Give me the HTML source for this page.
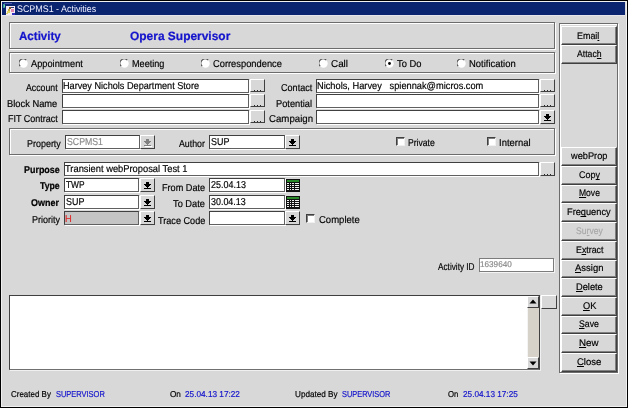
<!DOCTYPE html><html><head><meta charset="utf-8"><style>*{margin:0;padding:0;box-sizing:border-box}html,body{width:628px;height:408px;overflow:hidden;background:#d8d8d8;font-family:"Liberation Sans",sans-serif}.a{position:absolute}.t{position:absolute;white-space:pre;line-height:14px;transform-origin:0 0;text-rendering:geometricPrecision}.u{position:relative}.u:after{content:"";position:absolute;left:0;right:0;bottom:1px;height:1px;background:currentColor}u{text-decoration:none;border-bottom:1px solid currentColor}</style></head><body>
<div class="a" style="left:0px;top:0px;width:628px;height:408px;background:#d8d8d8"></div>
<div class="a" style="left:0px;top:0px;width:628px;height:1px;background:#000"></div>
<div class="a" style="left:0px;top:0px;width:1px;height:408px;background:#000"></div>
<div class="a" style="left:0px;top:407px;width:628px;height:1px;background:#000"></div>
<div class="a" style="left:627px;top:0px;width:1px;height:408px;background:#000"></div>
<div class="a" style="left:1px;top:1px;width:626px;height:1px;background:#f0f0f0"></div>
<div class="a" style="left:1px;top:1px;width:1px;height:406px;background:#f0f0f0"></div>
<div class="a" style="left:1px;top:406px;width:626px;height:1px;background:#f0f0f0"></div>
<div class="a" style="left:626px;top:1px;width:1px;height:406px;background:#f0f0f0"></div>
<div class="a" style="left:2px;top:2px;width:623px;height:13px;background:#0a2470"></div>
<div class="a" style="left:2px;top:15px;width:623px;height:1px;background:#e6e6ea"></div>
<div class="a" style="left:9px;top:22px;width:546px;height:27px;border:1px solid #6c6c6c;box-shadow:inset 1px 1px 0 #fff,1px 1px 0 #fff"></div>
<div class="a" style="left:9px;top:52px;width:546px;height:21px;border:1px solid #6c6c6c;box-shadow:inset 1px 1px 0 #fff,1px 1px 0 #fff"></div>
<div class="a" style="left:9px;top:128px;width:546px;height:27px;border:1px solid #6c6c6c;box-shadow:inset 1px 1px 0 #fff,1px 1px 0 #fff"></div>
<div class="a" style="left:559px;top:23px;width:59px;height:350px;border:1px solid #6c6c6c;box-shadow:inset 1px 1px 0 #fff,1px 1px 0 #fff"></div>
<div class="a" style="left:62px;top:79px;width:187px;height:14px;background:#fff;border:1px solid;border-color:#404040 #606060 #606060 #404040;box-shadow:1px 1px 0 #fff"></div>
<div class="a" style="left:250px;top:79px;width:15px;height:13px;background:#d8d8d8;border:1px solid;border-color:#fff #404040 #404040 #fff"></div>
<div class="a" style="left:254px;top:90px;width:1px;height:1px;background:#282828"></div>
<div class="a" style="left:257px;top:90px;width:1px;height:1px;background:#282828"></div>
<div class="a" style="left:260px;top:90px;width:1px;height:1px;background:#282828"></div>
<div class="a" style="left:316px;top:79px;width:223px;height:14px;background:#fff;border:1px solid;border-color:#404040 #606060 #606060 #404040;box-shadow:1px 1px 0 #fff"></div>
<div class="a" style="left:62px;top:94px;width:187px;height:14px;background:#fff;border:1px solid;border-color:#404040 #606060 #606060 #404040;box-shadow:1px 1px 0 #fff"></div>
<div class="a" style="left:250px;top:94px;width:15px;height:13px;background:#d8d8d8;border:1px solid;border-color:#fff #404040 #404040 #fff"></div>
<div class="a" style="left:254px;top:105px;width:1px;height:1px;background:#282828"></div>
<div class="a" style="left:257px;top:105px;width:1px;height:1px;background:#282828"></div>
<div class="a" style="left:260px;top:105px;width:1px;height:1px;background:#282828"></div>
<div class="a" style="left:316px;top:94px;width:223px;height:14px;background:#fff;border:1px solid;border-color:#404040 #606060 #606060 #404040;box-shadow:1px 1px 0 #fff"></div>
<div class="a" style="left:62px;top:110px;width:187px;height:14px;background:#fff;border:1px solid;border-color:#404040 #606060 #606060 #404040;box-shadow:1px 1px 0 #fff"></div>
<div class="a" style="left:250px;top:110px;width:15px;height:13px;background:#d8d8d8;border:1px solid;border-color:#fff #404040 #404040 #fff"></div>
<div class="a" style="left:254px;top:121px;width:1px;height:1px;background:#282828"></div>
<div class="a" style="left:257px;top:121px;width:1px;height:1px;background:#282828"></div>
<div class="a" style="left:260px;top:121px;width:1px;height:1px;background:#282828"></div>
<div class="a" style="left:316px;top:110px;width:223px;height:14px;background:#fff;border:1px solid;border-color:#404040 #606060 #606060 #404040;box-shadow:1px 1px 0 #fff"></div>
<div class="a" style="left:540px;top:79px;width:15px;height:13px;background:#d8d8d8;border:1px solid;border-color:#fff #404040 #404040 #fff"></div>
<div class="a" style="left:544px;top:90px;width:1px;height:1px;background:#282828"></div>
<div class="a" style="left:547px;top:90px;width:1px;height:1px;background:#282828"></div>
<div class="a" style="left:550px;top:90px;width:1px;height:1px;background:#282828"></div>
<div class="a" style="left:540px;top:94px;width:15px;height:13px;background:#d8d8d8;border:1px solid;border-color:#fff #404040 #404040 #fff"></div>
<div class="a" style="left:544px;top:105px;width:1px;height:1px;background:#282828"></div>
<div class="a" style="left:547px;top:105px;width:1px;height:1px;background:#282828"></div>
<div class="a" style="left:550px;top:105px;width:1px;height:1px;background:#282828"></div>
<div class="a" style="left:540px;top:110px;width:15px;height:14px;background:#d8d8d8;border:1px solid;border-color:#fff #404040 #404040 #fff"></div>
<svg class="a" style="left:540px;top:110px" width="15" height="14"><path d="M6 4h3v2h-3z M4 6h7v1h-7z M5 7h5v1h-5z M6 8h3v1h-3z M7 9h1v1h-1z M4 10h7v1h-7z" fill="#000"/></svg>
<div class="a" style="left:65px;top:135px;width:75px;height:14px;background:#fff;border:1px solid;border-color:#404040 #606060 #606060 #404040;box-shadow:1px 1px 0 #fff"></div>
<div class="a" style="left:140px;top:135px;width:15px;height:14px;background:#d8d8d8;border:1px solid;border-color:#fff #404040 #404040 #fff"></div>
<svg class="a" style="left:140px;top:135px" width="15" height="14"><path d="M5 11h7v1h-7z" fill="#fff"/><path d="M6 4h3v2h-3z M4 6h7v1h-7z M5 7h5v1h-5z M6 8h3v1h-3z M7 9h1v1h-1z M4 10h7v1h-7z" fill="#808080"/></svg>
<div class="a" style="left:209px;top:135px;width:76px;height:14px;background:#fff;border:1px solid;border-color:#404040 #606060 #606060 #404040;box-shadow:1px 1px 0 #fff"></div>
<div class="a" style="left:285px;top:135px;width:15px;height:14px;background:#d8d8d8;border:1px solid;border-color:#fff #404040 #404040 #fff"></div>
<svg class="a" style="left:285px;top:135px" width="15" height="14"><path d="M6 4h3v2h-3z M4 6h7v1h-7z M5 7h5v1h-5z M6 8h3v1h-3z M7 9h1v1h-1z M4 10h7v1h-7z" fill="#000"/></svg>
<div class="a" style="left:396px;top:137px;width:9px;height:9px;background:#fff;border:1px solid;border-color:#404040 #f0f0f0 #f0f0f0 #404040;box-shadow:inset 1px 1px 0 #808080"></div>
<div class="a" style="left:487px;top:137px;width:9px;height:9px;background:#fff;border:1px solid;border-color:#404040 #f0f0f0 #f0f0f0 #404040;box-shadow:inset 1px 1px 0 #808080"></div>
<div class="a" style="left:306px;top:214px;width:9px;height:9px;background:#fff;border:1px solid;border-color:#404040 #f0f0f0 #f0f0f0 #404040;box-shadow:inset 1px 1px 0 #808080"></div>
<svg class="a" style="left:19px;top:59px" width="10" height="10"><circle cx="4.5" cy="4.5" r="4.2" fill="#fff"/><path d="M1.2 7.2A4.2 4.2 0 0 1 7.2 1.2" stroke="#505050" stroke-width="1.1" fill="none"/></svg>
<svg class="a" style="left:120px;top:59px" width="10" height="10"><circle cx="4.5" cy="4.5" r="4.2" fill="#fff"/><path d="M1.2 7.2A4.2 4.2 0 0 1 7.2 1.2" stroke="#505050" stroke-width="1.1" fill="none"/></svg>
<svg class="a" style="left:201px;top:59px" width="10" height="10"><circle cx="4.5" cy="4.5" r="4.2" fill="#fff"/><path d="M1.2 7.2A4.2 4.2 0 0 1 7.2 1.2" stroke="#505050" stroke-width="1.1" fill="none"/></svg>
<svg class="a" style="left:319px;top:59px" width="10" height="10"><circle cx="4.5" cy="4.5" r="4.2" fill="#fff"/><path d="M1.2 7.2A4.2 4.2 0 0 1 7.2 1.2" stroke="#505050" stroke-width="1.1" fill="none"/></svg>
<svg class="a" style="left:385px;top:59px" width="10" height="10"><circle cx="4.5" cy="4.5" r="4.2" fill="#fff"/><path d="M1.2 7.2A4.2 4.2 0 0 1 7.2 1.2" stroke="#505050" stroke-width="1.1" fill="none"/><circle cx="4.5" cy="4.5" r="1.4" fill="#000"/></svg>
<svg class="a" style="left:457px;top:59px" width="10" height="10"><circle cx="4.5" cy="4.5" r="4.2" fill="#fff"/><path d="M1.2 7.2A4.2 4.2 0 0 1 7.2 1.2" stroke="#505050" stroke-width="1.1" fill="none"/></svg>
<div class="a" style="left:64px;top:162px;width:475px;height:14px;background:#fff;border:1px solid;border-color:#404040 #606060 #606060 #404040;box-shadow:1px 1px 0 #fff"></div>
<div class="a" style="left:540px;top:162px;width:15px;height:14px;background:#d8d8d8;border:1px solid;border-color:#fff #404040 #404040 #fff"></div>
<div class="a" style="left:544px;top:174px;width:1px;height:1px;background:#282828"></div>
<div class="a" style="left:547px;top:174px;width:1px;height:1px;background:#282828"></div>
<div class="a" style="left:550px;top:174px;width:1px;height:1px;background:#282828"></div>
<div class="a" style="left:64px;top:178px;width:75px;height:14px;background:#fff;border:1px solid;border-color:#404040 #606060 #606060 #404040;box-shadow:1px 1px 0 #fff"></div>
<div class="a" style="left:140px;top:178px;width:15px;height:14px;background:#d8d8d8;border:1px solid;border-color:#fff #404040 #404040 #fff"></div>
<svg class="a" style="left:140px;top:178px" width="15" height="14"><path d="M6 4h3v2h-3z M4 6h7v1h-7z M5 7h5v1h-5z M6 8h3v1h-3z M7 9h1v1h-1z M4 10h7v1h-7z" fill="#000"/></svg>
<div class="a" style="left:64px;top:195px;width:75px;height:14px;background:#fff;border:1px solid;border-color:#404040 #606060 #606060 #404040;box-shadow:1px 1px 0 #fff"></div>
<div class="a" style="left:140px;top:195px;width:15px;height:14px;background:#d8d8d8;border:1px solid;border-color:#fff #404040 #404040 #fff"></div>
<svg class="a" style="left:140px;top:195px" width="15" height="14"><path d="M6 4h3v2h-3z M4 6h7v1h-7z M5 7h5v1h-5z M6 8h3v1h-3z M7 9h1v1h-1z M4 10h7v1h-7z" fill="#000"/></svg>
<div class="a" style="left:64px;top:211px;width:75px;height:14px;background:#c4c4c4;border:1px solid;border-color:#404040 #606060 #606060 #404040;box-shadow:1px 1px 0 #fff"></div>
<div class="a" style="left:140px;top:211px;width:15px;height:14px;background:#d8d8d8;border:1px solid;border-color:#fff #404040 #404040 #fff"></div>
<svg class="a" style="left:140px;top:211px" width="15" height="14"><path d="M6 4h3v2h-3z M4 6h7v1h-7z M5 7h5v1h-5z M6 8h3v1h-3z M7 9h1v1h-1z M4 10h7v1h-7z" fill="#000"/></svg>
<div class="a" style="left:209px;top:178px;width:76px;height:14px;background:#fff;border:1px solid;border-color:#404040 #606060 #606060 #404040;box-shadow:1px 1px 0 #fff"></div>
<div class="a" style="left:209px;top:195px;width:76px;height:14px;background:#fff;border:1px solid;border-color:#404040 #606060 #606060 #404040;box-shadow:1px 1px 0 #fff"></div>
<div class="a" style="left:209px;top:211px;width:76px;height:14px;background:#fff;border:1px solid;border-color:#404040 #606060 #606060 #404040;box-shadow:1px 1px 0 #fff"></div>
<div class="a" style="left:285px;top:211px;width:15px;height:14px;background:#d8d8d8;border:1px solid;border-color:#fff #404040 #404040 #fff"></div>
<svg class="a" style="left:285px;top:211px" width="15" height="14"><path d="M6 4h3v2h-3z M4 6h7v1h-7z M5 7h5v1h-5z M6 8h3v1h-3z M7 9h1v1h-1z M4 10h7v1h-7z" fill="#000"/></svg>
<svg class="a" style="left:286px;top:179px" width="14" height="13" shape-rendering="crispEdges"><rect width="14" height="13" fill="#101010"/><rect x="1" y="1" width="12" height="2" fill="#2a8a2a"/><rect x="1" y="4" width="2" height="1" fill="#f0f0f0"/><rect x="4" y="4" width="1" height="1" fill="#f0f0f0"/><rect x="6" y="4" width="2" height="1" fill="#f0f0f0"/><rect x="9" y="4" width="4" height="1" fill="#f0f0f0"/><rect x="1" y="6" width="2" height="1" fill="#f0f0f0"/><rect x="4" y="6" width="1" height="1" fill="#f0f0f0"/><rect x="6" y="6" width="2" height="1" fill="#f0f0f0"/><rect x="9" y="6" width="4" height="1" fill="#f0f0f0"/><rect x="1" y="8" width="2" height="1" fill="#f0f0f0"/><rect x="4" y="8" width="1" height="1" fill="#f0f0f0"/><rect x="6" y="8" width="2" height="1" fill="#f0f0f0"/><rect x="9" y="8" width="4" height="1" fill="#f0f0f0"/><rect x="1" y="10" width="2" height="1" fill="#f0f0f0"/><rect x="4" y="10" width="1" height="1" fill="#f0f0f0"/><rect x="6" y="10" width="2" height="1" fill="#f0f0f0"/><rect x="9" y="10" width="4" height="1" fill="#f0f0f0"/></svg>
<svg class="a" style="left:286px;top:196px" width="14" height="13" shape-rendering="crispEdges"><rect width="14" height="13" fill="#101010"/><rect x="1" y="1" width="12" height="2" fill="#2a8a2a"/><rect x="1" y="4" width="2" height="1" fill="#f0f0f0"/><rect x="4" y="4" width="1" height="1" fill="#f0f0f0"/><rect x="6" y="4" width="2" height="1" fill="#f0f0f0"/><rect x="9" y="4" width="4" height="1" fill="#f0f0f0"/><rect x="1" y="6" width="2" height="1" fill="#f0f0f0"/><rect x="4" y="6" width="1" height="1" fill="#f0f0f0"/><rect x="6" y="6" width="2" height="1" fill="#f0f0f0"/><rect x="9" y="6" width="4" height="1" fill="#f0f0f0"/><rect x="1" y="8" width="2" height="1" fill="#f0f0f0"/><rect x="4" y="8" width="1" height="1" fill="#f0f0f0"/><rect x="6" y="8" width="2" height="1" fill="#f0f0f0"/><rect x="9" y="8" width="4" height="1" fill="#f0f0f0"/><rect x="1" y="10" width="2" height="1" fill="#f0f0f0"/><rect x="4" y="10" width="1" height="1" fill="#f0f0f0"/><rect x="6" y="10" width="2" height="1" fill="#f0f0f0"/><rect x="9" y="10" width="4" height="1" fill="#f0f0f0"/></svg>
<div class="a" style="left:479px;top:258px;width:75px;height:14px;background:#fff;border:1px solid #7c7c7c;box-shadow:1px 1px 0 #f4f4f4"></div>
<div class="a" style="left:9px;top:295px;width:531px;height:75px;background:#fff;border:1px solid;border-color:#404040 #404040 #707070 #404040;box-shadow:1px 1px 0 #f0f0f0"></div>
<div class="a" style="left:527px;top:296px;width:12px;height:73px;background:#d6d2ca;border-left:1px solid #f4f4f4"></div>
<div class="a" style="left:527px;top:296px;width:12px;height:12px;background:#d8d8d8;border:1px solid;border-color:#fff #404040 #404040 #fff"></div>
<div class="a" style="left:527px;top:357px;width:12px;height:12px;background:#d8d8d8;border:1px solid;border-color:#fff #404040 #404040 #fff"></div>
<svg class="a" style="left:527px;top:296px" width="12" height="12"><path d="M6 3.5L9.5 7.5H2.5z" fill="#000"/></svg>
<svg class="a" style="left:527px;top:357px" width="12" height="12"><path d="M6 8.5L9.5 4.5H2.5z" fill="#000"/></svg>
<div class="a" style="left:541px;top:295px;width:16px;height:14px;background:#d8d8d8;border:1px solid;border-color:#fff #404040 #404040 #fff"></div>
<svg class="a" style="left:2px;top:2px" width="14" height="13" shape-rendering="crispEdges"><rect x="2" y="1" width="8" height="1" fill="#4a58b0"/><rect x="1" y="2" width="2" height="4" fill="#3a9a9a"/><rect x="2" y="3" width="1" height="2" fill="#70e0b0"/><rect x="4" y="4" width="9" height="9" fill="#f4eef4"/><rect x="9" y="5" width="3" height="1" fill="#30306a"/><rect x="7" y="5" width="2" height="2" fill="#805030"/><rect x="9" y="7" width="3" height="3" fill="#e088b0"/><rect x="6" y="7" width="2" height="2" fill="#c8b040"/><rect x="5" y="9" width="3" height="2" fill="#e0d860"/><rect x="4" y="11" width="2" height="1" fill="#d8d070"/><rect x="10" y="11" width="3" height="2" fill="#3030c0"/></svg>
<div class="a" style="left:561px;top:26px;width:56px;height:19px;background:#d8d8d8;border-top:1px solid #fff;border-left:1px solid #fff;border-right:1px solid #404040;border-bottom:1px solid #404040;box-shadow:inset -1px -1px 0 #808080"></div>
<div class="a" style="left:561px;top:45px;width:56px;height:19px;background:#d8d8d8;border-top:1px solid #fff;border-left:1px solid #fff;border-right:1px solid #404040;border-bottom:1px solid #404040;box-shadow:inset -1px -1px 0 #808080"></div>
<div class="a" style="left:561px;top:147px;width:56px;height:19px;background:#d8d8d8;border-top:1px solid #fff;border-left:1px solid #fff;border-right:1px solid #404040;border-bottom:1px solid #404040;box-shadow:inset -1px -1px 0 #808080"></div>
<div class="a" style="left:561px;top:166px;width:56px;height:19px;background:#d8d8d8;border-top:1px solid #fff;border-left:1px solid #fff;border-right:1px solid #404040;border-bottom:1px solid #404040;box-shadow:inset -1px -1px 0 #808080"></div>
<div class="a" style="left:561px;top:185px;width:56px;height:18px;background:#d8d8d8;border-top:1px solid #fff;border-left:1px solid #fff;border-right:1px solid #404040;border-bottom:1px solid #404040;box-shadow:inset -1px -1px 0 #808080"></div>
<div class="a" style="left:561px;top:203px;width:56px;height:19px;background:#d8d8d8;border-top:1px solid #fff;border-left:1px solid #fff;border-right:1px solid #404040;border-bottom:1px solid #404040;box-shadow:inset -1px -1px 0 #808080"></div>
<div class="a" style="left:561px;top:222px;width:56px;height:19px;background:#d8d8d8;border-top:1px solid #fff;border-left:1px solid #fff;border-right:1px solid #404040;border-bottom:1px solid #404040;box-shadow:inset -1px -1px 0 #808080"></div>
<div class="a" style="left:561px;top:241px;width:56px;height:19px;background:#d8d8d8;border-top:1px solid #fff;border-left:1px solid #fff;border-right:1px solid #404040;border-bottom:1px solid #404040;box-shadow:inset -1px -1px 0 #808080"></div>
<div class="a" style="left:561px;top:260px;width:56px;height:18px;background:#d8d8d8;border-top:1px solid #fff;border-left:1px solid #fff;border-right:1px solid #404040;border-bottom:1px solid #404040;box-shadow:inset -1px -1px 0 #808080"></div>
<div class="a" style="left:561px;top:278px;width:56px;height:19px;background:#d8d8d8;border-top:1px solid #fff;border-left:1px solid #fff;border-right:1px solid #404040;border-bottom:1px solid #404040;box-shadow:inset -1px -1px 0 #808080"></div>
<div class="a" style="left:561px;top:297px;width:56px;height:19px;background:#d8d8d8;border-top:1px solid #fff;border-left:1px solid #fff;border-right:1px solid #404040;border-bottom:1px solid #404040;box-shadow:inset -1px -1px 0 #808080"></div>
<div class="a" style="left:561px;top:316px;width:56px;height:18px;background:#d8d8d8;border-top:1px solid #fff;border-left:1px solid #fff;border-right:1px solid #404040;border-bottom:1px solid #404040;box-shadow:inset -1px -1px 0 #808080"></div>
<div class="a" style="left:561px;top:334px;width:56px;height:19px;background:#d8d8d8;border-top:1px solid #fff;border-left:1px solid #fff;border-right:1px solid #404040;border-bottom:1px solid #404040;box-shadow:inset -1px -1px 0 #808080"></div>
<div class="a" style="left:561px;top:353px;width:56px;height:19px;background:#d8d8d8;border-top:1px solid #fff;border-left:1px solid #fff;border-right:1px solid #404040;border-bottom:1px solid #404040;box-shadow:inset -1px -1px 0 #808080"></div>
<div class="t" style="left:16.54px;top:3px;font-size:9.6px;color:#f0f0ff;transform:scaleX(0.9283) translateZ(0);-webkit-text-stroke:0px currentColor">SCPMS1 - Activities</div>
<div class="t" style="left:18.77px;top:29px;font-size:12px;color:#1414cc;transform:scaleX(0.9640) translateZ(0);-webkit-text-stroke:0.22px currentColor;font-weight:bold">Activity</div>
<div class="t" style="left:129.62px;top:29px;font-size:12px;color:#1414cc;transform:scaleX(0.9959) translateZ(0);-webkit-text-stroke:0.22px currentColor;font-weight:bold">Opera Supervisor</div>
<div class="t" style="left:31.20px;top:58px;font-size:10px;color:#000;transform:scaleX(0.9240) translateZ(0);-webkit-text-stroke:0.18px currentColor">Appointment</div>
<div class="t" style="left:131.97px;top:58px;font-size:10px;color:#000;transform:scaleX(0.9119) translateZ(0);-webkit-text-stroke:0.18px currentColor">Meeting</div>
<div class="t" style="left:213.33px;top:58px;font-size:10px;color:#000;transform:scaleX(0.9319) translateZ(0);-webkit-text-stroke:0.18px currentColor">Correspondence</div>
<div class="t" style="left:330.91px;top:58px;font-size:10px;color:#000;transform:scaleX(0.9873) translateZ(0);-webkit-text-stroke:0.18px currentColor">Call</div>
<div class="t" style="left:396.81px;top:58px;font-size:10px;color:#000;transform:scaleX(0.9350) translateZ(0);-webkit-text-stroke:0.18px currentColor">To Do</div>
<div class="t" style="left:468.85px;top:58px;font-size:10px;color:#000;transform:scaleX(0.9437) translateZ(0);-webkit-text-stroke:0.18px currentColor">Notification</div>
<div class="t" style="left:26.10px;top:82px;font-size:10px;color:#000;transform:scaleX(0.8740) translateZ(0);-webkit-text-stroke:0.18px currentColor">Account</div>
<div class="t" style="left:7.15px;top:98px;font-size:10px;color:#000;transform:scaleX(0.9328) translateZ(0);-webkit-text-stroke:0.18px currentColor">Block Name</div>
<div class="t" style="left:7.98px;top:113px;font-size:10px;color:#000;transform:scaleX(0.8998) translateZ(0);-webkit-text-stroke:0.18px currentColor">FIT Contract</div>
<div class="t" style="left:280.65px;top:82px;font-size:10px;color:#000;transform:scaleX(0.9092) translateZ(0);-webkit-text-stroke:0.18px currentColor">Contact</div>
<div class="t" style="left:276.26px;top:98px;font-size:10px;color:#000;transform:scaleX(0.9255) translateZ(0);-webkit-text-stroke:0.18px currentColor">Potential</div>
<div class="t" style="left:268.52px;top:113px;font-size:10px;color:#000;transform:scaleX(0.9659) translateZ(0);-webkit-text-stroke:0.18px currentColor">Campaign</div>
<div class="t" style="left:63.27px;top:80px;font-size:10px;color:#000;transform:scaleX(0.9135) translateZ(0);-webkit-text-stroke:0.18px currentColor">Harvey Nichols Department Store</div>
<div class="t" style="left:317.26px;top:80px;font-size:10px;color:#000;transform:scaleX(0.9258) translateZ(0);-webkit-text-stroke:0.18px currentColor">Nichols, Harvey   spiennak@micros.com</div>
<div class="t" style="left:27.18px;top:138px;font-size:10px;color:#000;transform:scaleX(0.8948) translateZ(0);-webkit-text-stroke:0.18px currentColor">Property</div>
<div class="t" style="left:66.65px;top:136px;font-size:10px;color:#8a8a8a;transform:scaleX(0.8743) translateZ(0);-webkit-text-stroke:0.18px currentColor">SCPMS1</div>
<div class="t" style="left:179.30px;top:138px;font-size:10px;color:#000;transform:scaleX(0.8796) translateZ(0);-webkit-text-stroke:0.18px currentColor">Author</div>
<div class="t" style="left:210.54px;top:136px;font-size:10px;color:#000;transform:scaleX(0.8938) translateZ(0);-webkit-text-stroke:0.18px currentColor">SUP</div>
<div class="t" style="left:408.41px;top:137px;font-size:10px;color:#000;transform:scaleX(0.8611) translateZ(0);-webkit-text-stroke:0.18px currentColor">Private</div>
<div class="t" style="left:498.85px;top:137px;font-size:10px;color:#000;transform:scaleX(0.9456) translateZ(0);-webkit-text-stroke:0.18px currentColor">Internal</div>
<div class="t" style="left:23.86px;top:164px;font-size:9.8px;color:#000;transform:scaleX(0.9123) translateZ(0);-webkit-text-stroke:0.22px currentColor;font-weight:bold">Purpose</div>
<div class="t" style="left:39.81px;top:180px;font-size:9.8px;color:#000;transform:scaleX(0.8903) translateZ(0);-webkit-text-stroke:0.22px currentColor;font-weight:bold">Type</div>
<div class="t" style="left:31.44px;top:197px;font-size:9.8px;color:#000;transform:scaleX(0.9162) translateZ(0);-webkit-text-stroke:0.22px currentColor;font-weight:bold">Owner</div>
<div class="t" style="left:31.98px;top:214px;font-size:10px;color:#000;transform:scaleX(0.9006) translateZ(0);-webkit-text-stroke:0.18px currentColor">Priority</div>
<div class="t" style="left:65.31px;top:163px;font-size:10px;color:#000;transform:scaleX(0.9334) translateZ(0);-webkit-text-stroke:0.18px currentColor">Transient webProposal Test 1</div>
<div class="t" style="left:65.83px;top:179px;font-size:10px;color:#000;transform:scaleX(0.8354) translateZ(0);-webkit-text-stroke:0.18px currentColor">TWP</div>
<div class="t" style="left:65.64px;top:196px;font-size:10px;color:#000;transform:scaleX(0.8938) translateZ(0);-webkit-text-stroke:0.18px currentColor">SUP</div>
<div class="t" style="left:65.46px;top:213px;font-size:10px;color:#e02828;transform:scaleX(0.9300) translateZ(0);-webkit-text-stroke:0.18px currentColor">H</div>
<div class="t" style="left:162.07px;top:182px;font-size:10px;color:#000;transform:scaleX(0.9117) translateZ(0);-webkit-text-stroke:0.18px currentColor">From Date</div>
<div class="t" style="left:173.21px;top:198px;font-size:10px;color:#000;transform:scaleX(0.9262) translateZ(0);-webkit-text-stroke:0.18px currentColor">To Date</div>
<div class="t" style="left:157.82px;top:215px;font-size:10px;color:#000;transform:scaleX(0.9120) translateZ(0);-webkit-text-stroke:0.18px currentColor">Trace Code</div>
<div class="t" style="left:211.25px;top:179px;font-size:10px;color:#000;transform:scaleX(0.8959) translateZ(0);-webkit-text-stroke:0.18px currentColor">25.04.13</div>
<div class="t" style="left:211.43px;top:196px;font-size:10px;color:#000;transform:scaleX(0.8912) translateZ(0);-webkit-text-stroke:0.18px currentColor">30.04.13</div>
<div class="t" style="left:318.72px;top:214px;font-size:10px;color:#000;transform:scaleX(0.9514) translateZ(0);-webkit-text-stroke:0.18px currentColor">Complete</div>
<div class="t" style="left:438.30px;top:261px;font-size:10px;color:#000;transform:scaleX(0.8222) translateZ(0);-webkit-text-stroke:0.18px currentColor">Activity ID</div>
<div class="t" style="left:480.23px;top:257px;font-size:8.4px;color:#8a8a8a;transform:scaleX(0.9745) translateZ(0);-webkit-text-stroke:0.18px currentColor">1639640</div>
<div class="t" style="left:10.50px;top:387px;font-size:8.6px;color:#000;transform:scaleX(0.9274) translateZ(0);-webkit-text-stroke:0.18px currentColor">Created By</div>
<div class="t" style="left:55.50px;top:387px;font-size:8.6px;color:#1414cc;transform:scaleX(0.8680) translateZ(0);-webkit-text-stroke:0.18px currentColor">SUPERVISOR</div>
<div class="t" style="left:170.17px;top:387px;font-size:8.6px;color:#000;transform:scaleX(0.9488) translateZ(0);-webkit-text-stroke:0.18px currentColor">On</div>
<div class="t" style="left:185.39px;top:387px;font-size:8.6px;color:#1414cc;transform:scaleX(0.9583) translateZ(0);-webkit-text-stroke:0.18px currentColor">25.04.13 17:22</div>
<div class="t" style="left:295.13px;top:387px;font-size:8.6px;color:#000;transform:scaleX(0.9495) translateZ(0);-webkit-text-stroke:0.18px currentColor">Updated By</div>
<div class="t" style="left:342.20px;top:387px;font-size:8.6px;color:#1414cc;transform:scaleX(0.8608) translateZ(0);-webkit-text-stroke:0.18px currentColor">SUPERVISOR</div>
<div class="t" style="left:448.29px;top:387px;font-size:8.6px;color:#000;transform:scaleX(0.9018) translateZ(0);-webkit-text-stroke:0.18px currentColor">On</div>
<div class="t" style="left:462.89px;top:387px;font-size:8.6px;color:#1414cc;transform:scaleX(0.9551) translateZ(0);-webkit-text-stroke:0.18px currentColor">25.04.13 17:25</div>
<div class="t" style="left:577.19px;top:30px;font-size:9.6px;color:#000;transform:scaleX(0.9300) translateZ(0);-webkit-text-stroke:0.18px currentColor">Emai<span class="u">l</span></div>
<div class="t" style="left:576.70px;top:48px;font-size:9.6px;color:#000;transform:scaleX(0.9034) translateZ(0);-webkit-text-stroke:0.18px currentColor">Attac<span class="u">h</span></div>
<div class="t" style="left:570.99px;top:150px;font-size:9.6px;color:#000;transform:scaleX(0.9618) translateZ(0);-webkit-text-stroke:0.18px currentColor">webProp</div>
<div class="t" style="left:579.05px;top:169px;font-size:9.6px;color:#000;transform:scaleX(0.9393) translateZ(0);-webkit-text-stroke:0.18px currentColor">Cop<span class="u">y</span></div>
<div class="t" style="left:578.92px;top:187px;font-size:9.6px;color:#000;transform:scaleX(0.8900) translateZ(0);-webkit-text-stroke:0.18px currentColor"><span class="u">M</span>ove</div>
<div class="t" style="left:567.06px;top:206px;font-size:9.6px;color:#000;transform:scaleX(0.9621) translateZ(0);-webkit-text-stroke:0.18px currentColor">Fre<span class="u">q</span>uency</div>
<div class="t" style="left:576.06px;top:225px;font-size:9.6px;color:#a8a8a8;transform:scaleX(0.8951) translateZ(0);-webkit-text-stroke:0.18px currentColor">Su<span class="u">r</span>vey</div>
<div class="t" style="left:575.69px;top:244px;font-size:9.6px;color:#000;transform:scaleX(0.9201) translateZ(0);-webkit-text-stroke:0.18px currentColor">E<span class="u">x</span>tract</div>
<div class="t" style="left:575.30px;top:262px;font-size:9.6px;color:#000;transform:scaleX(0.9867) translateZ(0);-webkit-text-stroke:0.18px currentColor"><span class="u">A</span>ssign</div>
<div class="t" style="left:576.06px;top:281px;font-size:9.6px;color:#000;transform:scaleX(0.9649) translateZ(0);-webkit-text-stroke:0.18px currentColor"><span class="u">D</span>elete</div>
<div class="t" style="left:582.93px;top:300px;font-size:9.6px;color:#000;transform:scaleX(0.9688) translateZ(0);-webkit-text-stroke:0.18px currentColor"><span class="u">O</span>K</div>
<div class="t" style="left:579.35px;top:318px;font-size:9.6px;color:#000;transform:scaleX(0.9125) translateZ(0);-webkit-text-stroke:0.18px currentColor"><span class="u">S</span>ave</div>
<div class="t" style="left:579.22px;top:337px;font-size:9.6px;color:#000;transform:scaleX(1.0156) translateZ(0);-webkit-text-stroke:0.18px currentColor"><span class="u">N</span>ew</div>
<div class="t" style="left:577.02px;top:356px;font-size:9.6px;color:#000;transform:scaleX(0.9909) translateZ(0);-webkit-text-stroke:0.18px currentColor"><span class="u">C</span>lose</div>
</body></html>
